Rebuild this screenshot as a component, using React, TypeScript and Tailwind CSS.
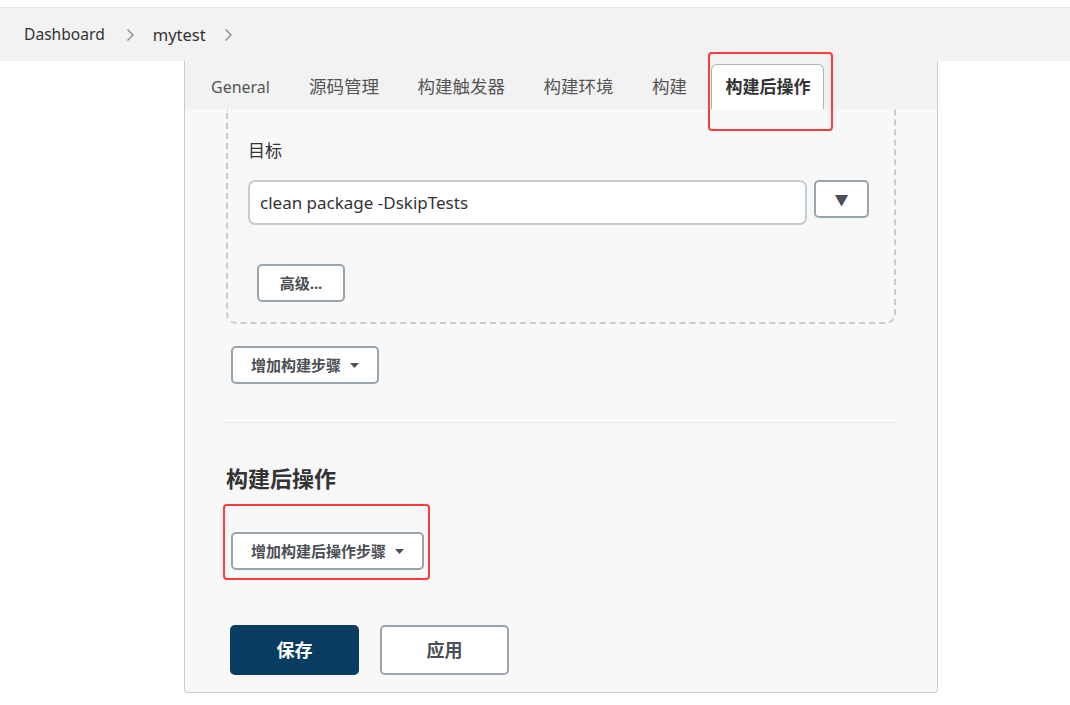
import React from "react";

function Caret() {
  return (
    <svg width="9" height="5" viewBox="0 0 9 5" className="ml-[9px]">
      <path d="M0 0h9L4.5 5z" fill="#4a4f5a" />
    </svg>
  );
}

function Chevron() {
  return (
    <svg width="9" height="14" viewBox="0 0 9 14">
      <path d="M1.5 1.5L7 7l-5.5 5.5" fill="none" stroke="#8a8a8a" strokeWidth="1.4" />
    </svg>
  );
}

export default function App() {
  const tabs = ["源码管理", "构建触发器", "构建环境", "构建"];
  return (
    <div className="relative w-full h-[705px] overflow-hidden bg-white text-[#333] font-['Noto_Sans','Noto_Sans_CJK_SC',sans-serif]">
      <div className="h-[7px]" />
      <header className="h-[54px] bg-[#f2f2f2] border-t border-[#e4e4e4] flex items-center pl-[24px] pt-[1px]">
        <span className="text-[15.6px] text-[#333]">Dashboard</span>
        <span className="ml-[21px] mr-[18px] flex items-center">
          <Chevron />
        </span>
        <span className="text-[16.5px] text-[#333]">mytest</span>
        <span className="ml-[18px] flex items-center">
          <Chevron />
        </span>
      </header>

      <div className="ml-[184px] w-[754px] h-[632px] bg-[#f8f8f8] border-x border-b border-[#c8cfd3] rounded-b-[4px] flex flex-col">
        <div className="relative z-10 h-[48px] bg-[#f2f2f2] flex items-end pl-[26px]">
          <div className="h-[45px] flex items-center mr-[39px] text-[16px] text-[#555] leading-none">
            General
          </div>
          {tabs.map((t) => (
            <div key={t} className="h-[45px] flex items-center mr-[38.5px] text-[17.5px] text-[#555] leading-none">
              {t}
            </div>
          ))}
          <div className="-ml-[14px] h-[45px] px-[13px] flex items-center bg-white border border-b-0 border-[#a9b3bb] rounded-t-[6px] text-[17px] font-bold text-[#333]">
            构建后操作
          </div>
        </div>

        <div className="flex flex-col px-[41px]">
          <div className="border-2 border-t-0 border-dashed border-[#c5cdd2] rounded-b-[10px] pl-[20px] pr-[25px] pt-[30px] pb-[20px]">
            <div className="text-[17px] leading-[24px] text-[#333]">目标</div>
            <div className="mt-[17px] flex items-start gap-[7px]">
              <div className="flex-1 h-[45px] bg-white border-2 border-[#c5cdd1] rounded-[7px] flex items-center pl-[10px] text-[17px] text-[#333]">
                clean package -DskipTests
              </div>
              <button className="w-[55px] h-[38px] bg-white border-2 border-[#9aa4ad] rounded-[5px] flex items-center justify-center text-[14px] text-[#4a4f5a]">
                ▼
              </button>
            </div>
            <button className="mt-[39px] ml-[9px] w-[88px] h-[38px] bg-white border-2 border-[#9aa4ad] rounded-[5px] text-[15px] font-bold text-[#4b4f57] flex items-center justify-center">
              高级...
            </button>
          </div>

          <button className="mt-[22px] ml-[5px] self-start h-[38px] w-[148px] bg-white border-2 border-[#9aa4ad] rounded-[5px] text-[15px] font-bold text-[#4b4f57] flex items-center justify-center">
            增加构建步骤
            <Caret />
          </button>

          <div className="mt-[38px] -mx-[2px] h-px bg-[#e6e8ea]" />

          <h2 className="mt-[40px] text-[22px] leading-[30px] font-bold text-[#333]">构建后操作</h2>

          <div className="mt-[11px] -ml-[3px] self-start border-2 border-[#ff3b3b] rounded-[4px] pl-[6px] pr-[4px] pt-[26px] pb-[8px]">
            <button className="h-[38px] w-[193px] bg-white border-2 border-[#9aa4ad] rounded-[5px] text-[15px] font-bold text-[#4b4f57] flex items-center justify-center">
              增加构建后操作步骤
              <Caret />
            </button>
          </div>

          <div className="mt-[45px] ml-[4px] flex gap-[21px]">
            <button className="w-[129px] h-[50px] bg-[#083d61] rounded-[5px] text-white text-[18px] font-bold flex items-center justify-center">
              保存
            </button>
            <button className="w-[129px] h-[50px] bg-white border-2 border-[#9aa4ad] rounded-[5px] text-[#4b4f57] text-[18px] font-bold flex items-center justify-center">
              应用
            </button>
          </div>
        </div>
      </div>

      <div className="absolute left-[708px] top-[52px] w-[125px] h-[79px] border-2 border-[#ff3b3b] rounded-[4px] z-20 pointer-events-none" />
    </div>
  );
}
